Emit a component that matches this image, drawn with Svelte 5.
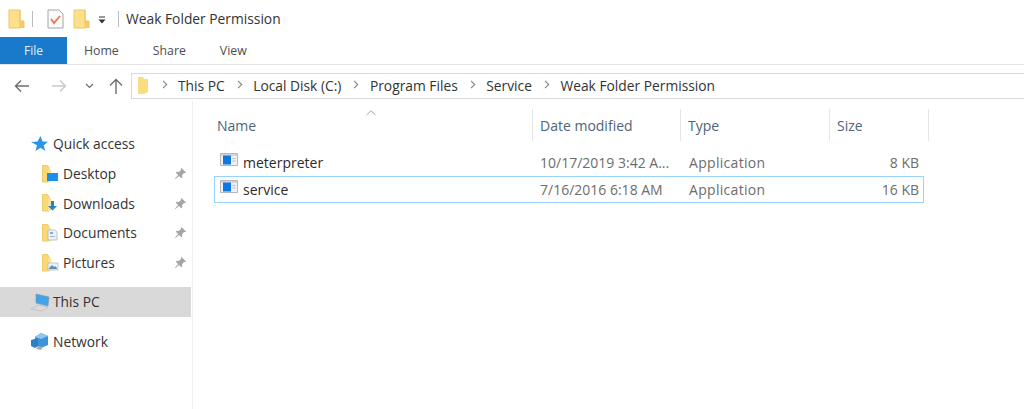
<script>
  const tabs = ['Home', 'Share', 'View'];
  const crumbs = ['This PC', 'Local Disk (C:)', 'Program Files', 'Service', 'Weak Folder Permission'];
  const pinned = [
    { name: 'Desktop', badge: 'desktop' },
    { name: 'Downloads', badge: 'down' },
    { name: 'Documents', badge: 'doc' },
    { name: 'Pictures', badge: 'pic' }
  ];
  const columns = [
    { name: 'Name', width: 319 },
    { name: 'Date modified', width: 148 },
    { name: 'Type', width: 149 },
    { name: 'Size', width: 99 }
  ];
  const files = [
    { name: 'meterpreter', date: '10/17/2019 3:42 A...', type: 'Application', size: '8 KB' },
    { name: 'service', date: '7/16/2016 6:18 AM', type: 'Application', size: '16 KB', selected: true }
  ];
</script>

{#snippet folder()}
  <svg class="folderIcon" width="17" height="20" viewBox="0 0 17 20">
    <path d="M1 1h11v18H1z" fill="#fde08c" stroke="#edc662" />
    <path d="M12 12h4v7h-4z" fill="#f2cc68" />
    <path d="M12 1v11h4v7" fill="none" stroke="#edc662" />
  </svg>
{/snippet}

{#snippet navFolder(badge)}
  <svg width="20" height="20" viewBox="0 0 20 20">
    <path d="M1.5 1.5h5l1.5 2v14.5h-6.500z" fill="#f9d876" stroke="#efcb6a" />
    <path d="M7 5h3v13H7z" fill="#fbe39b" />
    {#if badge === 'desktop'}
      <path d="M6 9h11v8H6z" fill="#1a90e6" />
    {:else if badge === 'down'}
      <path d="M10 8h3v5h3l-4.500 4.500L7 13h3z" fill="#2f7fd0" />
    {:else if badge === 'doc'}
      <path d="M7 7h7l2 2v8H7z" fill="#eef1f4" stroke="#a9b2ba" stroke-width="0.7" />
      <path d="M9 9h3v2H9z" fill="#7bb0dd" />
      <path d="M9 13h5v1H9z" fill="#a9b2ba" />
    {:else}
      <path d="M7 10h10v7H7z" fill="#eef3f7" stroke="#a9b2ba" stroke-width="0.7" />
      <path d="M8 15l3-3 2 2 1-1 2 2v1H8z" fill="#5d8fb8" />
    {/if}
  </svg>
{/snippet}

{#snippet pin()}
  <svg class="pin" width="13" height="13" viewBox="0 0 13 13">
    <path d="M7.500 1l4.500 4.500-1 .7-1-.3-2 2.300.3 2-1 1-2.300-2.300L1.500 12l-.5-.5 3.100-3.500L1.800 5.800l1-1 2 .3 2.300-2-.3-1z" fill="#a5a5a5" />
  </svg>
{/snippet}

{#snippet appIcon()}
  <svg class="appIcon" width="18" height="14" viewBox="0 0 18 14">
    <path d="M.5.500h17v12H.500z" fill="#eef0f2" stroke="#b4b8bc" />
    <path d="M1 1h16v2H1z" fill="#d2d5d8" />
    <path d="M3 2.500h8v9H3z" fill="#0f78e0" />
    <path d="M12.500 5h3v1h-3zM12.500 7.500h3v1h-3z" fill="#b5bac0" />
  </svg>
{/snippet}

<div class="window">
  <div class="titleBar">
    {@render folder()}
    <span class="qatSep first"></span>
    <svg class="props" width="17" height="20" viewBox="0 0 17 20">
      <path d="M1 1h11l4 4v14H1z" fill="#fbfbfb" stroke="#a5a5a5" />
      <path d="M4 10l3 4 6-7" fill="none" stroke="#e8764a" stroke-width="1.800" />
    </svg>
    {@render folder()}
    <svg class="qatArrow" width="8" height="8" viewBox="0 0 8 8">
      <path d="M1 1h6" stroke="#333" fill="none" />
      <path d="M0.500 3.500h7L4 7.500z" fill="#333" />
    </svg>
    <span class="qatSep"></span>
    <span class="windowTitle">Weak Folder Permission</span>
  </div>

  <div class="ribbon">
    <div class="fileTab">File</div>
    {#each tabs as tab}
      <div class="tab">{tab}</div>
    {/each}
  </div>

  <div class="navBar">
    <svg class="back" width="16" height="14" viewBox="0 0 16 14">
      <path d="M15 7H2M7 1.500 1.500 7 7 12.500" fill="none" stroke="#6e6e6e" stroke-width="1.400" />
    </svg>
    <svg class="forward" width="16" height="14" viewBox="0 0 16 14">
      <path d="M1 7h13M9 1.500 14.500 7 9 12.500" fill="none" stroke="#c9c9c9" stroke-width="1.400" />
    </svg>
    <svg class="recent" width="9" height="6" viewBox="0 0 9 6">
      <path d="M1 1l3.500 3.500L8 1" fill="none" stroke="#6e6e6e" stroke-width="1.200" />
    </svg>
    <svg class="up" width="14" height="16" viewBox="0 0 14 16">
      <path d="M7 16V2M1 7.500 7 1.500l6 6" fill="none" stroke="#6e6e6e" stroke-width="1.400" />
    </svg>
    <div class="addressBar">
      <svg class="addrFolder" width="12" height="17" viewBox="0 0 12 17">
        <path d="M1 0h5l1 2h4v13l-4 2H1z" fill="#fbdc80" />
      </svg>
      {#each crumbs as crumb}
        <svg class="chev" width="6" height="9" viewBox="0 0 6 9">
          <path d="M1 .800 4.700 4.500 1 8.200" fill="none" stroke="#8a8a8a" stroke-width="1.200" />
        </svg>
        <span class="crumb">{crumb}</span>
      {/each}
    </div>
  </div>

  <div class="body">
    <nav class="sidebar">
      <div class="navRow top quick">
        <svg width="18" height="18" viewBox="0 0 18 18">
          <path d="M10.500 1l2 5.500 5.500.3-4.300 3.500 1.500 5.700-4.700-3.200L5.500 16l1.500-5.700L1 7l6.500-.5z" fill="#2a94ea" />
        </svg>
        <span>Quick access</span>
      </div>
      {#each pinned as item}
        <div class="navRow child">
          {@render navFolder(item.badge)}
          <span class="grow">{item.name}</span>
          {@render pin()}
        </div>
      {/each}
      <div class="navRow top thisPc">
        <svg width="22" height="20" viewBox="0 0 22 20">
          <path d="M6 2l13 3-1 9-12-3z" fill="#3fa4ea" stroke="#8a9aa8" stroke-width="0.700" />
          <path d="M1 17l8-4 9 2-6 4z" fill="#d8dcdf" stroke="#b5babf" stroke-width="0.700" />
        </svg>
        <span>This PC</span>
      </div>
      <div class="navRow top network">
        <svg width="20" height="20" viewBox="0 0 20 20">
          <path d="M11 1l7 3v9l-7 3-6-3V5z" fill="#3d93d8" />
          <path d="M11 1l7 3-7 3-6-2z" fill="#8fc6ee" />
          <path d="M1 8l7-2v8l-3 2-4-2z" fill="#2b7fc4" />
          <path d="M8 14l5 1-2 3-5-1z" fill="#a7adb2" />
        </svg>
        <span>Network</span>
      </div>
    </nav>

    <main class="list">
      <svg class="sortCaret" width="10" height="6" viewBox="0 0 10 6">
        <path d="M.5 5 5 .800 9.500 5" fill="none" stroke="#a6a6a6" />
      </svg>
      <div class="head">
        {#each columns as col}
          <div class="headCell" style="width: {col.width}px">{col.name}</div>
        {/each}
      </div>
      {#each files as file}
        <div class="fileRow" class:selected={file.selected}>
          <div class="cell nameCell">{@render appIcon()}<span>{file.name}</span></div>
          <div class="cell dateCell">{file.date}</div>
          <div class="cell typeCell">{file.type}</div>
          <div class="cell sizeCell">{file.size}</div>
        </div>
      {/each}
    </main>
  </div>
</div>

<style>
  :global(body) {
    background: #fff;
    overflow: hidden;
  }

  .window {
    width: 1024px;
    height: 409px;
    font-family: "Open Sans", "Noto Sans", sans-serif;
    font-size: 14px;
    color: #2b2b2b;
    background: #fff;
    overflow: hidden;
  }

  .titleBar {
    display: flex;
    align-items: center;
    height: 37px;
    padding-left: 8px;
    box-sizing: border-box;
  }

  .qatSep {
    width: 1px;
    height: 16px;
    background: #bdbdbd;
  }

  .qatSep.first {
    margin: 0 14px 0 7px;
  }

  .props {
    margin-right: 9px;
  }

  .qatArrow {
    margin-left: 8px;
    margin-top: 2px;
  }

  .qatSep:not(.first) {
    margin: 0 7px 0 12px;
  }

  .windowTitle {
    font-size: 13.8px;
    color: #333;
  }

  .ribbon {
    display: flex;
    height: 28px;
    border-bottom: 1px solid #e3e3e3;
    box-sizing: border-box;
  }

  .fileTab {
    width: 67px;
    background: #1979ca;
    color: #e8f2fb;
    font-size: 12px;
    text-align: center;
    line-height: 27px;
  }

  .tab {
    font-size: 12.300px;
    line-height: 27px;
    color: #4d4d4d;
    padding: 0 17px;
  }

  .navBar {
    display: flex;
    align-items: center;
    height: 36px;
    box-sizing: border-box;
    padding-top: 5px;
  }

  .back {
    margin-left: 14px;
  }

  .forward {
    margin-left: 21px;
  }

  .recent {
    margin-left: 18px;
  }

  .up {
    margin-left: 15px;
  }

  .addressBar {
    display: flex;
    align-items: center;
    flex: 1;
    height: 26px;
    margin-left: 8px;
    border: 1px solid #dadada;
    border-right: none;
    box-sizing: border-box;
  }

  .addrFolder {
    margin-left: 5px;
    margin-right: 2px;
  }

  .chev {
    margin: -2px 10.500px 0 12px;
  }

  .addrFolder + .chev {
    margin-left: 11px;
    margin-right: 10px;
  }

  .crumb {
    font-size: 13.8px;
    color: #333;
    white-space: nowrap;
  }

  .body {
    display: flex;
  }

  .sidebar {
    width: 193px;
    height: 308px;
    box-sizing: border-box;
    border-right: 1px solid #efefef;
    padding: 28px 1px 0 0;
    flex-shrink: 0;
  }

  .navRow {
    display: flex;
    align-items: center;
    height: 29.700px;
    font-size: 13.8px;
    color: #333;
    gap: 2px;
  }

  .navRow.top {
    padding-left: 30px;
  }

  .navRow.child {
    padding-left: 41px;
    padding-right: 4px;
  }

  .quick {
    gap: 5px;
  }

  .grow {
    flex: 1;
  }

  .thisPc {
    height: 30px;
    background: #d9d9d9;
    margin-top: 9.500px;
    gap: 1px;
  }

  .network {
    height: 30px;
    margin-top: 10px;
    gap: 3px;
  }

  .list {
    position: relative;
    padding: 8px 0 0 21px;
  }

  .sortCaret {
    position: absolute;
    left: 173px;
    top: 9px;
  }

  .head {
    display: flex;
    height: 32px;
  }

  .headCell {
    box-sizing: border-box;
    padding-left: 7px;
    padding-top: 7px;
    font-size: 14px;
    color: #4f6477;
    border-right: 1px solid #e5e5e5;
  }

  .headCell:first-child {
    padding-left: 3px;
  }

  .fileRow {
    display: flex;
    align-items: center;
    width: 710px;
    height: 27px;
    box-sizing: border-box;
    margin-top: 8px;
    border: 1px solid transparent;
    font-size: 14px;
  }

  .fileRow.selected {
    margin-top: 0;
    border-color: #99d1ff;
  }

  .cell {
    box-sizing: border-box;
    color: #6d6d6d;
    white-space: nowrap;
  }

  .nameCell {
    display: flex;
    align-items: center;
    width: 318px;
    padding-left: 5px;
    color: #2b2b2b;
    gap: 5px;
  }

  .appIcon {
    margin-top: -5px;
  }

  .dateCell {
    width: 148px;
    padding-left: 7px;
  }

  .typeCell {
    width: 149px;
    padding-left: 8px;
    letter-spacing: 0.3px;
  }

  .sizeCell {
    width: 89px;
    text-align: right;
  }
</style>
